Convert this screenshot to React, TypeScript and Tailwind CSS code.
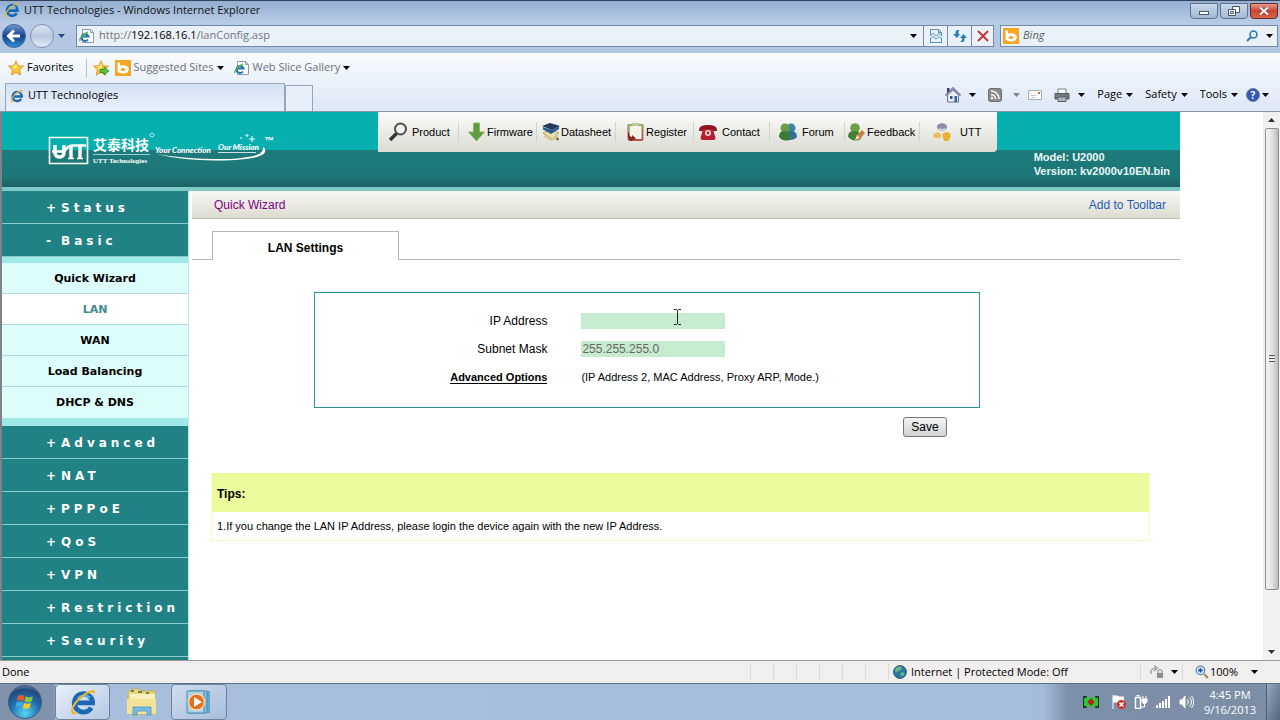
import React, { useState } from 'react';

const UI = "font-['Open_Sans',sans-serif]";

const Caret = ({ className = 'text-black' }: { className?: string }) => (
    <svg viewBox="0 0 7 4" className={`h-1 w-[7px] shrink-0 ${className}`} fill="currentColor">
        <path d="M0 0h7L3.5 4z" />
    </svg>
);

const IeIcon = ({ className = 'size-4' }: { className?: string }) => (
    <svg viewBox="0 0 32 32" className={`shrink-0 ${className}`} fill="none">
        <path d="M25.5 22.5A10.5 10.5 0 1 1 27 17H9" stroke="#1b66b5" strokeWidth="5.5" />
        <path d="M24 11a10 10 0 0 0-14 1" stroke="#56b6ea" strokeWidth="2.5" />
        <path d="M4 30C-2 24 10 8 24 3c6-2 7 1 4 6 1-4-1-5-5-3C12 11 4 22 5 26c1 3 4 2 7 0-3 3-6 5-8 4z" fill="#e9b52c" />
    </svg>
);

const PageIcon = () => (
    <svg viewBox="0 0 16 16" className="size-4 shrink-0">
        <path d="M3.500 1.500h8l3 3v10h-11z" fill="#fff" stroke="#8d98a6" />
        <path d="M11.500 1.500v3h3" fill="none" stroke="#8d98a6" />
        <path d="M9 11.500A3.500 3.500 0 1 1 9.500 8.500H3.500" fill="none" stroke="#2372ae" strokeWidth="2" />
        <path d="M1 13C0 11 4 6 9 4" fill="none" stroke="#5eae58" strokeWidth="1.500" />
    </svg>
);

const BingIcon = () => (
    <svg viewBox="0 0 16 16" className="size-4 shrink-0">
        <path d="M0 0h16v16H0z" fill="#f5a623" />
        <path d="M2.500 2.500H5v3q8-1.500 9 3.500-1 5-6.500 4.500T2.500 10z" fill="#fff" />
        <ellipse cx="8" cy="9.500" rx="2.500" ry="1.500" fill="#f5a623" />
    </svg>
);

const Star = ({ add = false }: { add?: boolean }) => (
    <svg viewBox="0 0 16 16" className="size-4 shrink-0">
        <path d="M8 .8l2.200 4.900 5.300.5-4 3.600 1.200 5.300L8 12.400l-4.700 2.700 1.200-5.300-4-3.600 5.300-.5z" fill="#fbc531" stroke="#d48a1b" strokeWidth=".8" />
        <path d="M8 3l1 4-4 3 1-3-3-1 4 0z" fill="#fff0a6" />
        {add && <path d="M7 9.500h4V7l5 4-5 4v-2.500H7z" fill="#54c440" stroke="#25831d" strokeWidth=".7" />}
    </svg>
);

const NavButtons = () => (
    <div className="flex w-[72px] shrink-0 items-center">
        <button aria-label="Back" className="flex size-6 items-center justify-center rounded-full border border-[#45608c] bg-linear-to-b from-[#6d9ad2] via-[#123f8c] to-[#2f8fd6]">
            <svg viewBox="0 0 16 16" className="size-4" fill="none" stroke="#fff" strokeWidth="3">
                <path d="M14 8H3M8 2.500L2.500 8 8 13.500" />
            </svg>
        </button>
        <button aria-label="Forward" className="ml-1 size-6 rounded-full border border-[#7f93b0] bg-linear-to-b from-[#dbe5f2] via-[#b9c9df] to-[#e3ecf7]" />
        <button aria-label="Recent pages" className="ml-1">
            <Caret className="text-[#1f4f86]" />
        </button>
    </div>
);

const TitleBar = () => (
    <div className="flex h-[22px] items-start border-t border-[#35455c] bg-linear-to-b from-[#93aed0] to-[#b7cbe6] pl-1">
        <IeIcon className="mt-px size-4" />
        <h1 className={`${UI} ml-1 truncate text-[11px] leading-[18px] text-[#111]`}>UTT Technologies - Windows Internet Explorer</h1>
        <div className="ml-auto flex gap-0.5 pt-0.5 pr-0.5">
            <button aria-label="Minimize" className="flex h-4 w-7 items-center justify-center rounded-b-sm border border-[#5f7491] bg-linear-to-b from-[#c9d8ec] to-[#a3b9d6]">
                <span className="mt-1 h-1 w-2.5 border border-[#4a586c] bg-white" />
            </button>
            <button aria-label="Restore" className="flex h-4 w-7 items-center justify-center rounded-b-sm border border-[#5f7491] bg-linear-to-b from-[#c9d8ec] to-[#a3b9d6]">
                <svg viewBox="0 0 12 10" className="h-2.5 w-3" fill="#fff" stroke="#4a586c">
                    <path d="M4.500.5h7v6h-7z" />
                    <path d="M.5 3.500h7v6h-7zM2.500 5.500h3v2h-3z" />
                </svg>
            </button>
            <button aria-label="Close" className="flex h-4 w-7 items-center justify-center rounded-b-sm border border-[#6b2a26] bg-linear-to-b from-[#e39a8b] via-[#c8432e] to-[#d8664c]">
                <svg viewBox="0 0 10 8" className="h-2 w-2.5" fill="none">
                    <path d="M1 .5l8 7M9 .5l-8 7" stroke="#6d3530" strokeWidth="3" />
                    <path d="M1 .5l8 7M9 .5l-8 7" stroke="#fff" strokeWidth="2" />
                </svg>
            </button>
        </div>
    </div>
);

const AddressBar = () => (
    <div className="flex h-[31px] items-center bg-linear-to-b from-[#b7cbe6] to-[#b3c6e1] pr-0.5 pb-1 pl-0.5">
        <NavButtons />
        <div className="ml-0.5 flex h-[22px] flex-1 items-center border border-[#7389a8] bg-[#ebf1f9]">
            <span className="ml-0.5"><PageIcon /></span>
            <div className={`${UI} ml-1 flex-1 text-[11px] text-[#6d7480]`}>
                http://<span className="text-black">192.168.16.1</span>/lanConfig.asp
            </div>
            <button aria-label="Show address list" className="flex h-full w-5 items-center justify-center"><Caret /></button>
            <button aria-label="Compatibility view" className="flex h-full w-6 items-center justify-center border-l border-[#7389a8]">
                <svg viewBox="0 0 14 14" className="size-3.5" fill="none" stroke="#4f92b4">
                    <path d="M1.500 6V.5h8l3 3V6M1.500 9v4.500h11V9M9.500.5v3h3" />
                    <path d="M1 7l3-2.500L7 7l3-2.500L13 7M1 10l3-2.500L7 10l3-2.500 3 2.500" />
                </svg>
            </button>
            <button aria-label="Refresh" className="flex h-full w-6 items-center justify-center border-l border-[#7389a8]">
                <svg viewBox="0 0 14 14" className="size-3.5" fill="#2b7fb0">
                    <path d="M4 1h2.500Q5 2.500 5.500 5H7L4 9 0 5h2.500Q2 2 4 1z" />
                    <path d="M10 13H7.500Q9.500 11.500 9 9H7l3.500-4L14 9h-2.500Q12 12 10 13z" />
                </svg>
            </button>
            <button aria-label="Stop" className="flex h-full w-[22px] items-center justify-center border-l border-[#7389a8]">
                <svg viewBox="0 0 12 12" className="size-3" fill="none" stroke="#c83037" strokeWidth="1.800">
                    <path d="M1 1l10 10M11 1L1 11" />
                </svg>
            </button>
        </div>
        <div className="ml-1.5 flex h-[22px] w-[278px] items-center border border-[#7389a8] bg-[#ebf1f9]">
            <span className="ml-0.5"><BingIcon /></span>
            <input aria-label="Search" placeholder="Bing" className={`${UI} ml-1 w-0 flex-1 bg-transparent text-[11px] italic outline-none placeholder:text-[#555c66]`} />
            <button aria-label="Search the web" className="mr-2">
                <svg viewBox="0 0 12 12" className="size-3" fill="none" stroke="#2d7cb6">
                    <circle cx="7.500" cy="4.500" r="3.500" strokeWidth="1.600" />
                    <path d="M5 7L1 11" strokeWidth="2.200" />
                </svg>
            </button>
            <button aria-label="Search options" className="mr-1"><Caret /></button>
        </div>
    </div>
);

const FavoritesBar = () => (
    <div className={`${UI} flex h-[29px] items-center bg-linear-to-b from-[#fafcff] to-[#eaf1fa] pl-2 text-[11px]`}>
        <button className="flex items-center gap-[3px]"><Star /><span>Favorites</span></button>
        <span className="mr-1.5 ml-3 h-5 w-px bg-[#b4c2d4]" />
        <button aria-label="Add to favorites"><Star add /></button>
        <button className="ml-1.5 flex items-center gap-[3px] text-[#6a7079]">
            <BingIcon /><span>Suggested Sites</span><Caret />
        </button>
        <button className="ml-2.5 flex items-center gap-[3px] text-[#6a7079]">
            <PageIcon /><span>Web Slice Gallery</span><Caret />
        </button>
    </div>
);

const TabRow = () => (
    <div className={`${UI} flex h-[30px] items-end border-b border-[#8594a8] bg-linear-to-b from-[#eaf1fa] to-[#dde8f6] pl-[5px] text-[11px]`}>
        <button className="flex h-7 w-[280px] items-center gap-1 border border-b-0 border-[#94a6c0] bg-linear-to-b from-[#d3e1f5] to-[#e9f1fb] pb-1 pl-1">
            <IeIcon className="size-3.5" />
            <span>UTT Technologies</span>
        </button>
        <button aria-label="New tab" className="h-[26px] w-7 border border-b-0 border-[#94a6c0] bg-[#e7eff9]" />
        <div className="ml-auto flex h-full items-center pr-[11px] pb-1 whitespace-nowrap">
            <button aria-label="Home" className="flex items-center gap-2">
                <svg viewBox="0 0 16 16" className="size-4">
                    <path d="M2.500 8v7h11V8L8 3z" fill="#e9edf4" stroke="#66718b" />
                    <path d="M.5 8.500L8 1l7.500 7.500" fill="none" stroke="#6f7fa5" strokeWidth="1.600" />
                    <path d="M2 1h2.500v3L2 6z" fill="#4a3a72" />
                    <path d="M5 9h2.500v3H5z" fill="#405a84" />
                    <path d="M9.500 9H12v6H9.500z" fill="#2d66a8" />
                </svg>
                <Caret />
            </button>
            <button aria-label="Feeds" className="ml-3 flex items-center gap-[11px]">
                <svg viewBox="0 0 14 14" className="size-3.5">
                    <rect x=".5" y=".5" width="13" height="13" rx="2" fill="#8c8c8c" stroke="#6e6e6e" />
                    <path d="M3 3a8 8 0 0 1 8 8M3 6.500A4.500 4.500 0 0 1 7.500 11" fill="none" stroke="#fff" strokeWidth="1.500" />
                    <circle cx="4" cy="10" r="1.200" fill="#fff" />
                </svg>
                <Caret className="text-[#7d8591]" />
            </button>
            <button aria-label="Read mail" className="ml-2">
                <svg viewBox="0 0 14 10" className="h-2.5 w-3.5">
                    <path d="M.5.5h13v9H.5z" fill="#fff" stroke="#a7acb4" />
                    <path d="M10 2h2v2h-2z" fill="#d5653f" />
                    <path d="M3 5.500h5M3 7.500h4" stroke="#bfc5cd" />
                </svg>
            </button>
            <button aria-label="Print" className="ml-3 flex items-center gap-2">
                <svg viewBox="0 0 16 14" className="h-3.5 w-4">
                    <path d="M4 1h8v5H4z" fill="#f4f6f8" stroke="#7c838c" />
                    <path d="M1 5.500h14v5.500H1z" fill="#717881" stroke="#535a62" />
                    <path d="M4 9h8v4.500H4z" fill="#e5e9ee" stroke="#535a62" />
                    <path d="M6 9v4M8 9v4M10 9v4" stroke="#7c838c" />
                </svg>
                <Caret />
            </button>
            <button className="ml-3 flex items-center gap-1">Page <Caret /></button>
            <button className="ml-3 flex items-center gap-1">Safety <Caret /></button>
            <button className="ml-3 flex items-center gap-1">Tools <Caret /></button>
            <button aria-label="Help" className="ml-2 flex items-center gap-0.5">
                <span className="flex size-3.5 items-center justify-center rounded-full border border-[#707f9f] bg-[#3358b5] text-[10px] leading-none font-bold text-white">?</span>
                <Caret />
            </button>
        </div>
    </div>
);

const Logo = () => (
    <svg viewBox="0 0 230 36" className="mt-[20px] ml-[46px] h-9 w-[230px]" fill="none">
        <path d="M1.500 5.500h38v26h-38z" stroke="#fff" strokeWidth="1.600" />
        <path d="M7 13v7q0 5 4.500 5t4.500-5v-7" stroke="#fff" strokeWidth="3.400" />
        <path d="M4 19.500h9q4 0 6-3.500 2-2.500 6-2.500h13" stroke="#fff" strokeWidth="2.600" />
        <path d="M23 14v13M32 14v13" stroke="#fff" strokeWidth="3.400" />
        <path d="M20 26.500h6M29 26.500h6" stroke="#fff" strokeWidth="1.400" />
        <text x="45" y="18" fontSize="14" fontWeight="700" fill="#fff" fontFamily="'Noto Sans CJK SC', sans-serif">艾泰科技</text>
        <circle cx="104" cy="3" r="2" stroke="#b8e6e4" />
        <path d="M45 22.500h57" stroke="#b8e6e4" strokeWidth=".8" />
        <text x="45" y="31" fontSize="7" fontWeight="700" fill="#fff" fontFamily="'Liberation Serif', serif">UTT Technologies</text>
        <text x="107" y="21" fontSize="8" fontWeight="900" fontStyle="italic" fill="#fff" fontFamily="Lato, sans-serif">Your Connection</text>
        <text x="170" y="18" fontSize="8" fontWeight="900" fontStyle="italic" fill="#fff" fontFamily="Lato, sans-serif">Our Mission</text>
        <path d="M108 22q30 7 62 6.500Q214 28 217 20q1-4-2-5 1 7-12 9.500-15 3-35 2.500-30 0-60-5z" fill="#fff" />
        <path d="M170 20.500h38" stroke="#fff" strokeWidth=".8" />
        <path d="M204 4v6M201 7h6M199 2v3M197.500 3.500h3M193 5v2" stroke="#fff" />
        <text x="216" y="12" fontSize="10" fontWeight="700" fill="#fff" fontFamily="'Liberation Sans', sans-serif">™</text>
    </svg>
);

const icons: Record<string, React.ReactNode> = {
    Product: (
        <>
            <circle cx="12.500" cy="7" r="5.500" fill="#eef3f1" stroke="#4c5046" strokeWidth="2" />
            <path d="M8.500 11.500L2 18" stroke="#35352f" strokeWidth="3.400" />
        </>
    ),
    Firmware: <path d="M6.500 1h6v9h5L9.500 19l-8-9h5z" fill="#5f9b41" stroke="#7fb066" strokeWidth=".8" />,
    Datasheet: (
        <>
            <path d="M2 11l7-3 9 3-7 6z" fill="#e9dfb4" stroke="#a89554" strokeWidth=".8" />
            <path d="M3 13l7 4 7-4v2l-6 4-8-4z" fill="#d9c684" />
            <path d="M1 4l8-3 10 3-8 4z" fill="#1f3a5c" />
            <path d="M2 5v2.500l8 4.500 8-5V4.500L11 8z" fill="#2d5d8d" />
            <circle cx="16.500" cy="17" r="1.500" fill="#8c6a3c" />
        </>
    ),
    Register: (
        <>
            <rect x="2.500" y="3" width="14" height="15" rx="1" fill="#f6f1ea" stroke="#b0584c" strokeWidth="1.800" />
            <path d="M2.500 10V3h14v5" fill="none" stroke="#8fae66" strokeWidth="1.800" />
            <path d="M6 1h7v3H6z" fill="#b9c99a" />
            <path d="M3 10q0 5 3 5v-2l4 3.500L5 19q-4-2-3-9z" fill="#8a2323" />
        </>
    ),
    Contact: (
        <>
            <path d="M1 8q0-5 9-5t9 5v1h-4.500V7h-9v2H1z" fill="#8f1521" />
            <path d="M5 7h10l2.500 9q0 2-2 2h-11q-2 0-2-2z" fill="#b3202d" />
            <circle cx="10" cy="11" r="3" fill="#f0d6d6" />
            <circle cx="10" cy="11" r="1.400" fill="#a32430" />
        </>
    ),
    Forum: (
        <>
            <circle cx="13" cy="6" r="4.500" fill="#3f83a8" />
            <path d="M7 18q0-9 6-9t6 6q-4 4-12 3z" fill="#2f6f9b" />
            <circle cx="7" cy="6" r="4.500" fill="#6b9e45" />
            <path d="M1 15q0-7 6-6 6 0 6 8-7 4-12-2z" fill="#3f7a3d" />
        </>
    ),
    Feedback: (
        <>
            <circle cx="8" cy="6" r="4.800" fill="#6b9e45" />
            <path d="M1 15q0-7 7-6 6 0 6 8-7 4-13-2z" fill="#447f38" />
            <path d="M8 18l2-5 5-5 3 3-5 6z" fill="#c68248" />
            <path d="M8 18l2-5 3 3z" fill="#f0dcb4" />
        </>
    ),
    UTT: (
        <>
            <ellipse cx="10" cy="5" rx="5" ry="3.800" fill="#8f8cab" />
            <path d="M7 5.500q3 3 6 0v2q-3 2-6 0z" fill="#d9d6e4" />
            <path d="M1.500 12l4-2 3.500 2v3l-3.500 1.500L1.500 15z" fill="#f0b95b" />
            <path d="M10.500 12q4-4 8 0v3l-2 4h-4l-2-4z" fill="#e7b32d" />
        </>
    ),
};

const links = [
    { label: 'Product', cell: 'w-[81px] pl-2.5 gap-1' },
    { label: 'Firmware', cell: 'w-[78px] pl-2' },
    { label: 'Datasheet', cell: 'w-[79px] pl-1' },
    { label: 'Register', cell: 'w-[78px] pl-2.5' },
    { label: 'Contact', cell: 'w-[76px] pl-1 gap-1' },
    { label: 'Forum', cell: 'w-[75px] pl-2 gap-1' },
    { label: 'Feedback', cell: 'w-[75px] pl-0.5' },
    { label: 'UTT', cell: 'w-[77px] pl-3 gap-2' },
];

const SiteHeader = () => (
    <header className="flex h-[79px] shrink-0 items-start border-b-4 border-[#7cc9c6] bg-[linear-gradient(#07b0ae_0px,#07b0ae_38px,#1e7b7b_38px,#1d7677_64px,#1b6264_100%)]">
        <div className="w-[376px] shrink-0"><Logo /></div>
        <nav className="flex h-10 shrink-0 items-center rounded-br-sm bg-linear-to-b from-[#fbfbf9] to-[#dcdcd4] text-[11px]">
            {links.map(({ label, cell }) => (
                <a key={label} href="#" className={`flex h-5 items-center border-r border-[#d4d4ce] text-black last:border-r-0 ${cell}`}>
                    <svg viewBox="0 0 20 20" className="size-5 shrink-0">{icons[label]}</svg>
                    {label}
                </a>
            ))}
        </nav>
        <p className="mt-[38px] ml-auto pr-2.5 text-[11px] leading-[14px] font-bold text-[#e9f8f8]">
            Model: U2000<br />Version: kv2000v10EN.bin
        </p>
    </header>
);

const topMenus = ['Status', 'Basic'];
const subMenus = ['Quick Wizard', 'LAN', 'WAN', 'Load Balancing', 'DHCP & DNS'];
const bottomMenus = ['Advanced', 'NAT', 'PPPoE', 'QoS', 'VPN', 'Restriction', 'Security'];

const MenuHead = ({ label }: { label: string }) => (
    <button className="flex h-[33px] w-full shrink-0 items-center border-b border-[#8fcaca] bg-[#208284] pt-0.5 pl-11 text-left text-xs font-bold text-white">
        <span className="w-[15px]">{label === 'Basic' ? '-' : '+'}</span>
        <span className="tracking-[4px]">{label}</span>
    </button>
);

const Sidebar = () => {
    const [active, setActive] = useState('LAN');

    return (
        <aside className="flex w-[187px] shrink-0 flex-col border-r border-[#bfe6e6] font-['DejaVu_Sans',Verdana,sans-serif]">
            {topMenus.map((label) => <MenuHead key={label} label={label} />)}
            <div className="shrink-0 border-t-[6px] border-b-8 border-[#9fe9e6]">
                {subMenus.map((label) => (
                    <button
                        key={label}
                        onClick={() => setActive(label)}
                        className={`block h-[31px] w-full border-b border-[#a9dcda] pt-0.5 text-center text-[11px] font-bold last:border-b-0 ${active === label ? 'bg-white text-[#3b8c8c]' : 'bg-[#dcfdfb] text-black'}`}
                    >
                        {label}
                    </button>
                ))}
            </div>
            {bottomMenus.map((label) => <MenuHead key={label} label={label} />)}
            <div className="flex-1 bg-[#208284]" />
        </aside>
    );
};

const TextCursor = () => (
    <svg viewBox="0 0 7 16" className="pointer-events-none absolute -top-1 left-[93px] h-4 w-[7px]" fill="none" stroke="#222">
        <path d="M0 .5h2.500l1 1 1-1H7M3.500 1v14M0 15.500h2.500l1-1 1 1H7" />
    </svg>
);

const LanSettings = () => {
    const [ip, setIp] = useState('');
    const [mask, setMask] = useState('255.255.255.0');

    return (
        <main className="min-w-0 flex-1 text-xs">
            <div className="flex h-7 items-center justify-between border-b border-[#b9b9b1] bg-linear-to-b from-[#f8f8f4] to-[#dddcd2] pr-3.5 pl-[22px]">
                <a href="#" className="text-[#800080]">Quick Wizard</a>
                <a href="#" className="text-[#1f5cb8]">Add to Toolbar</a>
            </div>
            <div className="mt-3 flex h-[29px]">
                <span className="w-5 border-b border-[#b5b5b5]" />
                <h2 className="flex w-[187px] items-center justify-center border border-b-0 border-[#b5b5b5] pt-1 text-xs font-bold">LAN Settings</h2>
                <span className="flex-1 border-b border-[#b5b5b5]" />
            </div>

            <form onSubmit={(e) => e.preventDefault()}>
                <div className="mt-8 mr-[200px] ml-[122px] flex flex-col border border-[#2f9296] pt-3.5 pb-4">
                    <div className="flex h-7 items-center">
                        <label htmlFor="ip" className="w-[35%] text-right">IP Address</label>
                        <div className="relative ml-[34px]">
                            <input id="ip" value={ip} onChange={(e) => setIp(e.target.value)} className="block h-4 w-36 bg-[#c7ebce] px-px text-[#666] outline-none" />
                            <TextCursor />
                        </div>
                    </div>
                    <div className="flex h-7 items-center">
                        <label htmlFor="mask" className="w-[35%] text-right">Subnet Mask</label>
                        <input id="mask" value={mask} onChange={(e) => setMask(e.target.value)} className="ml-[34px] block h-4 w-36 bg-[#c7ebce] px-px text-[#666] outline-none" />
                    </div>
                    <div className="flex h-7 items-center text-[11px]">
                        <div className="w-[35%] text-right">
                            <a href="#" className="border-b border-black font-bold">Advanced Options</a>
                        </div>
                        <span className="ml-[34px]">(IP Address 2, MAC Address, Proxy ARP, Mode.)</span>
                    </div>
                </div>
                <div className="mt-[9px] mr-[233px] flex justify-end">
                    <button type="submit" className="h-5 w-11 rounded-[3px] border border-[#767676] bg-linear-to-b from-[#f4f4f4] to-[#d2d2d2]">Save</button>
                </div>
            </form>

            <section className="mt-9 mr-[30px] ml-[19px] border border-t-0 border-[#f5fbd0]">
                <h3 className="flex h-[39px] items-center bg-[#ebfb9c] px-[5px] pt-0.5 text-xs font-bold">Tips:</h3>
                <p className="px-[5px] py-1.5 text-[11px] leading-4">1.If you change the LAN IP Address, please login the device again with the new IP Address.</p>
            </section>
        </main>
    );
};

const Scrollbar = () => (
    <div className="flex w-[17px] shrink-0 flex-col items-center bg-[#f1f1f1]">
        <span className="flex h-4 items-center"><Caret className="rotate-180 text-[#333]" /></span>
        <div className="flex min-h-0 w-[14px] flex-[85] items-center justify-center rounded-xs border border-[#8f8f8f] bg-linear-to-r from-[#f6f6f6] via-[#e2e2e2] to-[#bcbcbc]">
            <span className="h-[7px] w-1.5 bg-[repeating-linear-gradient(#555_0px_1px,#eee_1px_3px)]" />
        </div>
        <div className="flex-[10]" />
        <span className="flex h-4 items-center"><Caret className="text-[#333]" /></span>
    </div>
);

const StatusBar = () => (
    <footer className={`${UI} flex h-[23px] shrink-0 items-center border-t border-[#999] bg-[#f1eeee] pl-0.5 text-[11px]`}>
        <span>Done</span>
        <div className="ml-auto flex h-4">
            {Array.from({ length: 6 }).map((_, index) => (
                <span key={index} className="w-[23px] border-l border-[#dcd9d9]" />
            ))}
        </div>
        <div className="flex h-4 w-[252px] items-center gap-1 border-l border-[#dcd9d9] pl-1">
            <svg viewBox="0 0 14 14" className="size-3.5 shrink-0">
                <circle cx="7" cy="7" r="6.500" fill="#2478a3" stroke="#47677e" />
                <path d="M3 3q4-3 6 0-1 3-4 3-2 3-3 0zM7 8q5-2 4 2-3 3-4-2z" fill="#66b884" />
            </svg>
            <span>Internet | Protected Mode: Off</span>
        </div>
        <button aria-label="Security" className="flex h-4 items-center gap-1.5 border-l border-[#dcd9d9] pr-1 pl-2">
            <svg viewBox="0 0 16 14" className="h-3.5 w-4">
                <path d="M2 9q-1-6 6-6M5 .5L8.500 3 5 6" fill="none" stroke="#a3a3a3" strokeWidth="1.500" />
                <path d="M8 8h6v5H8z" fill="#8e8e8e" />
                <path d="M9 8V6q2-3 4 0v2" fill="none" stroke="#8e8e8e" strokeWidth="1.200" />
            </svg>
            <Caret />
        </button>
        <button className="flex h-4 items-center gap-px border-l border-[#dcd9d9] pr-[22px] pl-3">
            <svg viewBox="0 0 13 13" className="size-3.5">
                <circle cx="5" cy="5" r="4" fill="#cde5f8" stroke="#3f73ad" />
                <path d="M3 5h4M5 3v4" stroke="#1a4f98" strokeWidth="1.500" />
                <path d="M8.500 8.500L12 12" stroke="#a88a56" strokeWidth="2" />
            </svg>
            <span>100%</span>
            <span className="ml-3"><Caret /></span>
        </button>
    </footer>
);

const Taskbar = () => (
    <div className="flex h-[37px] shrink-0 items-center border-t border-[#5d6f88] bg-[linear-gradient(to_right,#8092ac_0px,#8092ac_54px,#a7bedd_56px,#a5bcdb_80%,#a3bad8_1044px,#7d90a9_1068px,#7c8ea6_100%)]">
        <button aria-label="Start" className="ml-2 flex size-[34px] shrink-0 items-center justify-center rounded-full border border-[#3f597b] bg-[radial-gradient(circle_at_50%_85%,#56d7f4_0%,#1f6fb0_45%,#234a7c_75%,#8fb3d4_100%)]">
            <svg viewBox="0 0 20 20" className="size-5">
                <path d="M3 4q3-2 6.500 0L8.500 9Q5 7.500 2 9z" fill="#e7582c" />
                <path d="M10.500 4.500q4 1.500 7.500 0l-1.500 5q-3.500 1.500-7 0z" fill="#8cc63e" />
                <path d="M1.500 10.500q3.500-1.500 6.500 0l-1 5q-3.500-2-6.500-.5z" fill="#3fa9e8" />
                <path d="M9 11q3.500 1.500 7 0l-1.500 5q-3.500 1.500-6.500 0z" fill="#fccb2e" />
            </svg>
        </button>
        <button aria-label="Internet Explorer" className="ml-[13px] flex h-9 w-[55px] items-center justify-center rounded-sm border border-[#6e83a0] bg-linear-to-br from-[#e9f0f9] to-[#b5c9e2]">
            <IeIcon className="size-7" />
        </button>
        <button aria-label="Windows Explorer" className="ml-1.5 flex h-9 w-[52px] items-center justify-center">
            <svg viewBox="0 0 32 28" className="h-7 w-8">
                <path d="M2 4l4-3h7l2 2h14v23H2z" fill="#ecd67f" stroke="#c9ae55" />
                <path d="M4 6h25v6H4z" fill="#faf0bf" />
                <path d="M5 3h3M12 4h4M20 5h3" stroke="#648d46" strokeWidth="2" />
                <path d="M1 11h29v15H1z" fill="#f5e395" />
                <path d="M7 27v-8h18v8h-4v-4H11v4z" fill="#75bde4" stroke="#4b91bd" strokeWidth=".8" />
            </svg>
        </button>
        <button aria-label="Windows Media Player" className="ml-[3px] flex h-9 w-[56px] items-center justify-center rounded-sm border border-[#6e83a0] bg-linear-to-br from-[#cfdcee] to-[#a8bedb]">
            <svg viewBox="0 0 26 24" className="h-6 w-[26px]">
                <path d="M5 1h19v22H5z" fill="#5ea7cf" />
                <path d="M3 1h18v22H3z" fill="#86c0df" stroke="#4b8db4" />
                <path d="M1 1h17v22H1z" fill="#acd2e6" stroke="#4b8db4" />
                <circle cx="10.500" cy="12" r="8" fill="#e86e1a" stroke="#f4d7b7" strokeWidth="1.500" />
                <path d="M8 7l8 5-8 5z" fill="#fff" />
            </svg>
        </button>

        <div className="ml-auto flex items-center gap-2">
            <svg viewBox="0 0 16 12" className="h-3 w-4">
                <path d="M0 0h4v3h8V0h4v12h-4V9H4v3H0z" fill="#173f1c" />
                <rect x="1" y="1.500" width="14" height="9" rx="2" fill="#30c437" />
                <path d="M8 2l3.500 4L8 10 4.500 6z" fill="#bb1e1e" />
            </svg>
            <svg viewBox="0 0 14 14" className="ml-[5px] size-3.5">
                <path d="M1 0v14M1.500 1h4l2 1h4v6h-4l-2-1h-4z" fill="#fff" stroke="#fff" />
                <circle cx="9.500" cy="9.500" r="4.500" fill="#cc3029" />
                <path d="M7.500 7.500l4 4M11.500 7.500l-4 4" stroke="#fff" strokeWidth="1.500" />
            </svg>
            <svg viewBox="0 0 14 14" className="size-3.5" fill="none" stroke="#fff">
                <path d="M1.500 2.500h5v11h-5zM2.500.5h3" strokeWidth="1.500" />
                <path d="M8 4h5v3l-2 2H10L8 7z" fill="#fff" />
                <path d="M9 1v3M12 1v3M10.500 9v3h-4" />
            </svg>
            <svg viewBox="0 0 15 12" className="h-3 w-[15px]" fill="#fff">
                <path d="M0 9h2v3H0zM3 7h2v5H3zM6 5h2v7H6zM9 3h2v9H9zM12 0h2v12h-2z" />
            </svg>
            <svg viewBox="0 0 15 14" className="h-3.5 w-[15px]" fill="none" stroke="#fff">
                <path d="M1 5h2l3-4v12L3 9H1z" fill="#fff" />
                <path d="M8.500 4.500q2 2.500 0 5M10.500 2.500q4 4.500 0 9M12.500 1q4.500 6 0 12" />
            </svg>
        </div>
        <div className={`${UI} mx-2 w-14 text-center text-[11px] leading-[15px] whitespace-nowrap text-white`}>
            4:45 PM<br />9/16/2013
        </div>
        <button aria-label="Show desktop" className="h-full w-3.5 border-l border-[#4e5d73] bg-linear-to-br from-[#98a8be] to-[#56657b]" />
    </div>
);

const App = () => {
    return (
        <div className="flex h-screen flex-col overflow-hidden bg-white font-['Liberation_Sans',Arial,sans-serif] text-black">
            <div className="shrink-0">
                <TitleBar />
                <AddressBar />
                <FavoritesBar />
                <TabRow />
            </div>
            <div className="flex min-h-0 flex-1 border-l-2 border-[#7d838b]">
                <div className="mr-[83px] flex min-w-0 flex-1 flex-col overflow-hidden">
                    <SiteHeader />
                    <div className="flex min-h-0 flex-1 gap-[3px]">
                        <Sidebar />
                        <LanSettings />
                    </div>
                </div>
                <Scrollbar />
            </div>
            <StatusBar />
            <Taskbar />
        </div>
    );
};

export default App;
